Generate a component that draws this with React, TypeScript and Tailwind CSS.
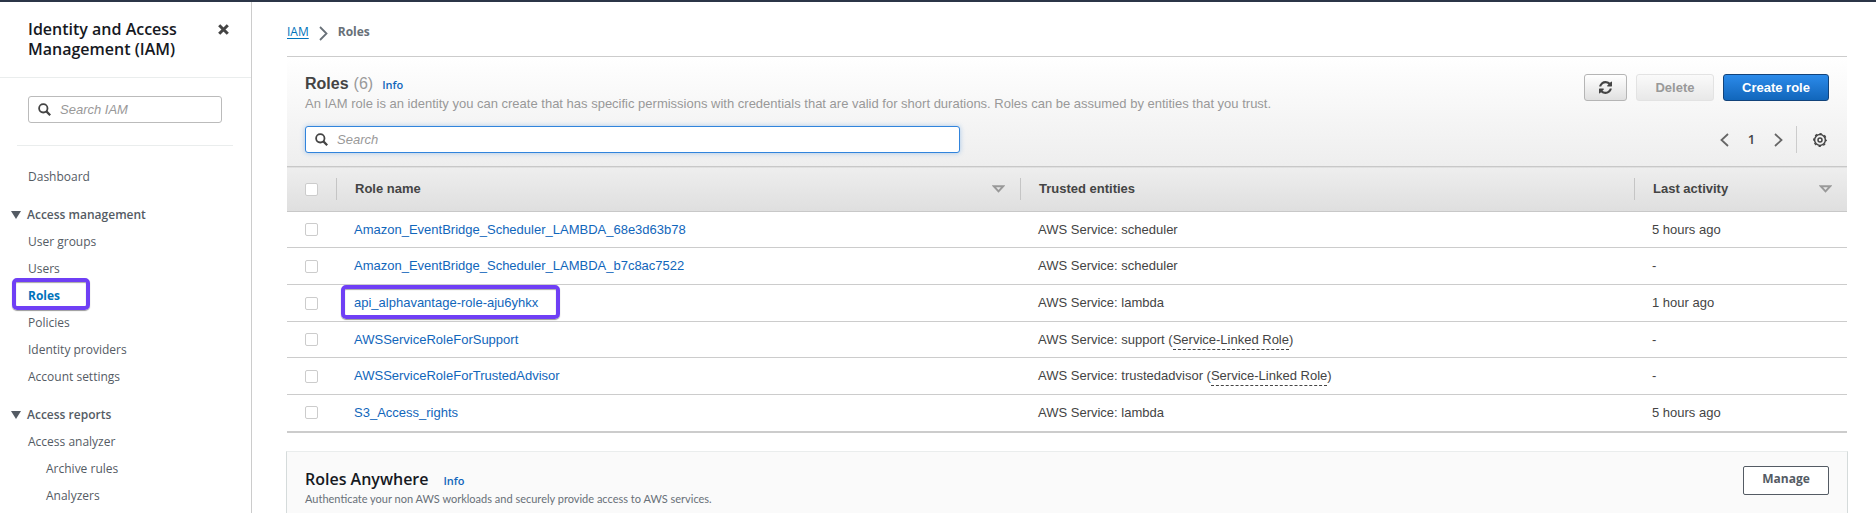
import type { ReactNode } from "react";

const EMBER = "font-['Open_Sans','Noto_Sans',sans-serif]";
const ARIAL = "font-['Liberation_Sans',Arial,sans-serif]";

type Role = { name: string; service: string; linked?: boolean; activity: string; marked?: boolean };

const roles: Role[] = [
  { name: "Amazon_EventBridge_Scheduler_LAMBDA_68e3d63b78", service: "scheduler", activity: "5 hours ago" },
  { name: "Amazon_EventBridge_Scheduler_LAMBDA_b7c8ac7522", service: "scheduler", activity: "-" },
  { name: "api_alphavantage-role-aju6yhkx", service: "lambda", activity: "1 hour ago", marked: true },
  { name: "AWSServiceRoleForSupport", service: "support", linked: true, activity: "-" },
  { name: "AWSServiceRoleForTrustedAdvisor", service: "trustedadvisor", linked: true, activity: "-" },
  { name: "S3_Access_rights", service: "lambda", activity: "5 hours ago" },
];

function SearchIcon() {
  return (
    <svg viewBox="0 0 13 13" className="size-[13px] shrink-0 text-[#444]" fill="none" stroke="currentColor" aria-hidden="true">
      <circle cx="5.3" cy="5.3" r="4.2" strokeWidth="1.8" />
      <path d="M8.4 8.4l3.8 3.8" strokeWidth="2.2" />
    </svg>
  );
}

function CloseIcon() {
  return (
    <svg viewBox="0 0 11 11" className="size-[11px]" stroke="#444" strokeWidth="3" aria-hidden="true">
      <path d="M1.2 1.2l8.6 8.6M9.8 1.2L1.2 9.8" />
    </svg>
  );
}

function RefreshIcon() {
  return (
    <svg viewBox="0 0 1536 1536" className="size-[13px]" fill="#444" aria-hidden="true">
      <path d="M1511 928q0 5-1 7-64 268-268 434.500t-478 166.500q-146 0-282.500-55t-243.500-157l-129 129q-19 19-45 19t-45-19-19-45v-448q0-26 19-45t45-19h448q26 0 45 19t19 45-19 45l-137 137q71 66 161 102t187 36q134 0 250-65t186-179q11-17 53-117 8-23 30-23h192q13 0 22.500 9.500t9.500 22.500zm25-800v448q0 26-19 45t-45 19h-448q-26 0-45-19t-19-45 19-45l138-138q-148-137-349-137-134 0-250 65t-186 179q-11 17-53 117-8 23-30 23h-199q-13 0-22.500-9.500t-9.500-22.500v-7q65-268 270-434.500t480-166.500q146 0 284 55.500t245 156.500l130-129q19-19 45-19t45 19 19 45z" />
    </svg>
  );
}

function GearIcon() {
  return (
    <svg viewBox="0 0 14 14" className="size-[14px]" fill="none" stroke="#444" aria-hidden="true">
      <circle cx="7" cy="7" r="5.4" strokeWidth="1.5" />
      <circle cx="7" cy="7" r="6.3" strokeWidth="1.2" strokeDasharray="2.45 2.5" strokeDashoffset="1.2" />
      <circle cx="7" cy="7" r="2" strokeWidth="1.5" />
    </svg>
  );
}

function SortIcon() {
  return (
    <svg viewBox="0 0 13 8" className="h-2 w-[13px] shrink-0" fill="none" stroke="#999" strokeWidth="1.9" aria-hidden="true">
      <path d="M1.8 1.2h9.4L6.5 6.400z" />
    </svg>
  );
}

function Chevron({ left = false }: { left?: boolean }) {
  return (
    <svg viewBox="0 0 9 14" className="h-[14px] w-[9px]" fill="none" stroke="#666" strokeWidth="1.8" aria-hidden="true">
      <path d={left ? "M8 1L1.500 7 8 13" : "M1 1l6.500 6L1 13"} />
    </svg>
  );
}

function Highlight({ className }: { className: string }) {
  return (
    <span
      aria-hidden="true"
      className={`pointer-events-none absolute rounded-[5px] border-4 border-[#6f3ff5] shadow-[0_1px_1px_rgba(0,0,0,0.4),inset_0_1px_1px_rgba(0,0,0,0.35)] ${className}`}
    />
  );
}

function NavItem({ children, nested = false }: { children: string; nested?: boolean }) {
  return (
    <li className={nested ? "pl-[46px]" : "pl-7"}>
      <a href="#" className="text-[#545b64]">{children}</a>
    </li>
  );
}

function NavHeading({ children }: { children: string }) {
  return (
    <h3 className="mt-[11px] flex items-center pl-[11px] font-semibold text-[#545b64]">
      <svg viewBox="0 0 10 8" className="mr-[6px] h-2 w-[10px]" fill="#545b64" aria-hidden="true">
        <path d="M0 0h10L5 8z" />
      </svg>
      {children}
    </h3>
  );
}

function Checkbox({ label }: { label: string }) {
  return (
    <input
      type="checkbox"
      aria-label={label}
      className="block size-[13px] appearance-none rounded-[2px] border border-[#ccc] bg-white"
    />
  );
}

function HeaderCell({ children, sortable = false }: { children: ReactNode; sortable?: boolean }) {
  return (
    <th className="p-0 text-left font-bold">
      <div className="flex h-[22px] items-center justify-between border-l border-[#c5c5c5] pr-[15px] pl-[18px]">
        {children}
        {sortable && <SortIcon />}
      </div>
    </th>
  );
}

export default function App() {
  return (
    <div className={`flex min-h-screen flex-col bg-white ${ARIAL} text-[13px] text-[#444]`}>
      <div className="h-[2px] bg-[#2b3547]" />
      <div className="flex h-[511px] grow overflow-hidden">
        <aside className={`w-[252px] shrink-0 border-r border-[#ccc] ${EMBER} text-xs leading-[27px]`}>
          <div className="flex items-start justify-between border-b border-[#eaeded] pt-[17px] pr-[22px] pb-[18px] pl-7">
            <h2 className="w-[160px] text-base leading-5 font-semibold text-[#16191f]">Identity and Access Management (IAM)</h2>
            <button type="button" aria-label="Close navigation" className="mt-[5px]">
              <CloseIcon />
            </button>
          </div>
          <div className="mr-[18px] ml-[17px] border-b border-[#eaeded] px-[11px] pt-[18px] pb-[22px]">
            <label className="flex h-[27px] items-center gap-[9px] rounded-[3px] border border-[#bbb] px-[9px]">
              <SearchIcon />
              <input
                aria-label="Search IAM"
                placeholder="Search IAM"
                className={`w-full min-w-0 ${ARIAL} text-[13px] leading-5 outline-none placeholder:text-[#999] placeholder:italic`}
              />
            </label>
          </div>
          <nav className="pt-[17px]">
            <ul>
              <NavItem>Dashboard</NavItem>
            </ul>
            <NavHeading>Access management</NavHeading>
            <ul>
              <NavItem>User groups</NavItem>
              <NavItem>Users</NavItem>
              <li className="relative pl-7">
                <a href="#" aria-current="page" className="font-bold text-[#0073bb]">Roles</a>
                <Highlight className="top-[-4px] left-3 h-8 w-[78px]" />
              </li>
              <NavItem>Policies</NavItem>
              <NavItem>Identity providers</NavItem>
              <NavItem>Account settings</NavItem>
            </ul>
            <NavHeading>Access reports</NavHeading>
            <ul>
              <NavItem>Access analyzer</NavItem>
              <NavItem nested>Archive rules</NavItem>
              <NavItem nested>Analyzers</NavItem>
            </ul>
          </nav>
        </aside>

        <main className="min-w-0 grow pr-[29px] pl-[35px]">
          <nav aria-label="Breadcrumb" className={`flex h-[54px] items-center pt-[6px] ${EMBER} text-xs`}>
            <a href="#" className="text-[#0073bb] underline underline-offset-2">IAM</a>
            <svg viewBox="0 0 9 15" className="mx-[10px] mt-[2px] h-[15px] w-[9px]" fill="none" stroke="#687078" strokeWidth="1.8" aria-hidden="true">
              <path d="M1 1l6.500 6.500L1 14" />
            </svg>
            <span className="font-bold text-[#687078]">Roles</span>
          </nav>

          <section>
            <header className="border-t border-[#ccc] bg-linear-to-b from-white to-[#eee] px-[18px] pt-[17px]">
              <div className="flex items-start justify-between">
                <div>
                  <h1 className="flex items-baseline text-base leading-5 font-bold">
                    Roles<span className="ml-[5px] font-normal text-[#999]">(6)</span>
                    <a href="#" className={`ml-[9px] ${EMBER} text-[11px] font-semibold text-[#1166bb]`}>Info</a>
                  </h1>
                  <p className="leading-[17px] text-[#999]">
                    An IAM role is an identity you can create that has specific permissions with credentials that are valid for short durations. Roles can be assumed by entities that you trust.
                  </p>
                </div>
                <div className="flex gap-[9px] font-bold">
                  <button type="button" aria-label="Refresh" className="flex h-[27px] w-[43px] items-center justify-center rounded-[3px] border border-[#b5b5b5] bg-linear-to-b from-white to-[#e0e0e0]">
                    <RefreshIcon />
                  </button>
                  <button type="button" disabled className="h-[27px] w-[78px] rounded-[3px] border border-[#e3e3e3] bg-linear-to-b from-[#fafafa] to-[#e8e8e8] text-[#999]">
                    Delete
                  </button>
                  <button type="button" className="h-[27px] w-[106px] rounded-[3px] border border-[#12437a] bg-linear-to-b from-[#2b8bea] to-[#1166bb] text-white">
                    Create role
                  </button>
                </div>
              </div>
              <div className="mt-[14px] flex h-10 items-start justify-between">
                <label className="flex h-[27px] w-[43%] items-center gap-[9px] rounded-[3px] border border-[#3184dc] bg-white px-[9px] shadow-[0_0_5px_rgba(49,132,220,0.4)]">
                  <SearchIcon />
                  <input
                    aria-label="Search roles"
                    placeholder="Search"
                    className="w-full min-w-0 text-[13px] outline-none placeholder:text-[#999] placeholder:italic"
                  />
                </label>
                <div className="flex h-[27px] items-center">
                  <button type="button" aria-label="Previous page"><Chevron left /></button>
                  <span className={`w-[45px] text-center ${EMBER} text-[13px] font-semibold`}>1</span>
                  <button type="button" aria-label="Next page"><Chevron /></button>
                  <span className="mr-[16px] ml-[13px] h-full border-l border-[#ccc]" />
                  <button type="button" aria-label="Preferences" className="mr-[2px]"><GearIcon /></button>
                </div>
              </div>
            </header>

            <table className="w-full table-fixed border-collapse border-b-2 border-[#ccc]">
              <colgroup>
                <col className="w-[49px]" />
                <col className="w-[684px]" />
                <col />
                <col className="w-[213px]" />
              </colgroup>
              <thead>
                <tr className="h-[45px] border-y border-[#c8c8c8] bg-linear-to-b from-[#eee] to-[#dfdfdf]">
                  <th className="p-0 pl-[18px]"><Checkbox label="Select all roles" /></th>
                  <HeaderCell sortable>Role name</HeaderCell>
                  <HeaderCell>Trusted entities</HeaderCell>
                  <HeaderCell sortable>Last activity</HeaderCell>
                </tr>
              </thead>
              <tbody>
                {roles.map((role) => (
                  <tr key={role.name} className="h-[37px] border-b border-[#ccc] nth-[3n+1]:h-9">
                    <td className="p-0 pl-[18px]"><Checkbox label={`Select ${role.name}`} /></td>
                    <td className="p-0 pl-[18px]">
                      <span className="relative">
                        <a href="#" className="text-[#1166bb]">{role.name}</a>
                        {role.marked && <Highlight className="top-[-10px] left-[-13px] h-[34px] w-[219px]" />}
                      </span>
                    </td>
                    <td className="p-0 pl-[18px]">
                      AWS Service: {role.service}
                      {role.linked && (
                        <>
                          {" ("}
                          <span className="border-b border-dashed border-[#444] pb-[2px]">Service-Linked Role</span>)
                        </>
                      )}
                    </td>
                    <td className="p-0 pl-[18px]">{role.activity}</td>
                  </tr>
                ))}
              </tbody>
            </table>
          </section>

          <section className={`-mx-px mt-[18px] flex h-[120px] items-start justify-between border border-[#d5dbdb] border-t-[#eaeded] bg-[#fafafa] pt-[14px] pr-[18px] pl-[18px] ${EMBER}`}>
            <div className="pt-[3px]">
              <h2 className="flex items-baseline text-base leading-5 font-semibold text-[#16191f]">
                Roles Anywhere
                <a href="#" className="ml-[15px] text-[11px] text-[#1166bb]">Info</a>
              </h2>
              <p className="font-[Lato,sans-serif] text-[11px] leading-4 text-[#687078]">
                Authenticate your non AWS workloads and securely provide access to AWS services.
              </p>
            </div>
            <button type="button" className="h-[29px] w-[86px] rounded-[2px] border border-[#545b64] bg-white pb-[2px] text-xs font-bold text-[#545b64]">
              Manage
            </button>
          </section>
        </main>
      </div>
    </div>
  );
}
